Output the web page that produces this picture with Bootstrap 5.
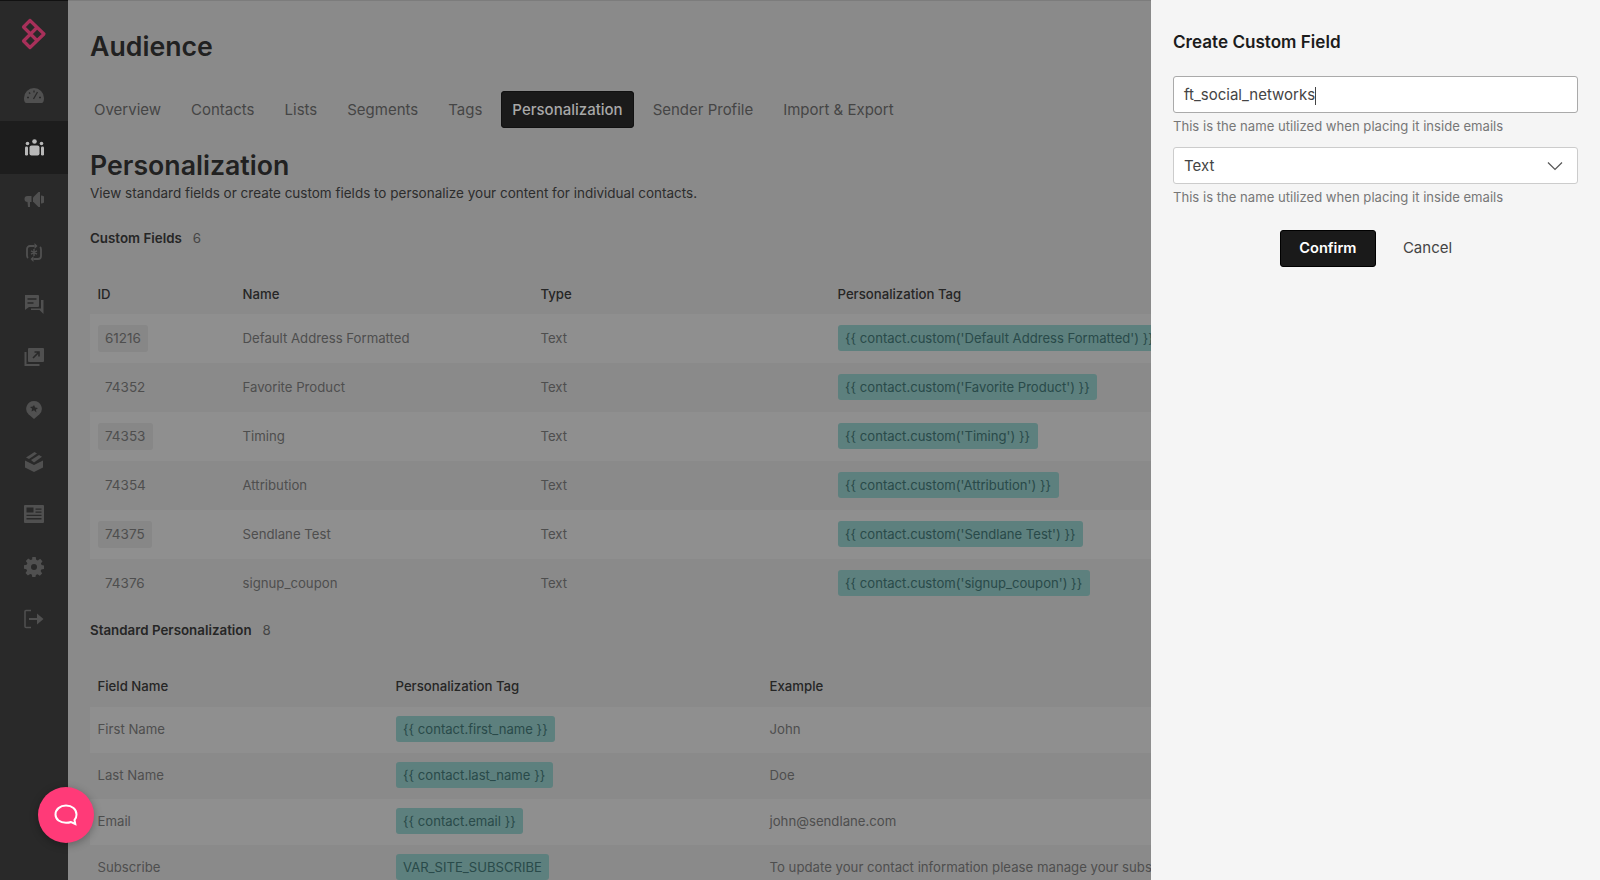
<!doctype html>
<html lang="en">
<head>
<meta charset="utf-8">
<title>Audience</title>
<link href="https://cdn.jsdelivr.net/npm/bootstrap@5.3.0/dist/css/bootstrap.min.css" rel="stylesheet">
<style>
html,body{height:100%;overflow:hidden}
body{font-family:Inter,"Liberation Sans",sans-serif;background:#f7f7f7;color:#8c8c8c;font-size:14px}
.app-shell{height:880px;overflow:hidden}
.side-rail{width:68px;flex:none;background:#292929;position:relative;z-index:1050;height:880px;border-top:1px solid #111}
.rail-logo{height:68px;padding-bottom:3px}
.rail-item{height:52.4px;color:#505050}
.rail-item.is-on{background:#1d1d1d;color:#b8b8b8}
.main-area{padding:26px 0 0 22px;min-width:0;flex:1;overflow:hidden;border-top:1px solid #ddd}
.page-name{font-size:26.7px;font-weight:600;color:#3c3c3c;line-height:38px;margin:0 0 26px}
.tab-row{margin:0 0 19px -7px}
.tab-row .nav-link{font-size:15px;color:#7c7c7c;padding:0 11px;height:37px;line-height:37px;margin-right:8px;border-radius:4px;background:none}
.tab-row .nav-link.active{background:#1a1a1a;color:#a8a8a8;font-weight:500;position:relative;z-index:1050;box-shadow:inset 0 0 0 1px #111}
.sec-title{font-size:26.7px;font-weight:600;color:#3c3c3c;line-height:36px;margin:0}
.sec-desc{font-size:13.5px;color:#505050;line-height:20px;margin:0 0 25px}
.count-row{font-size:13.35px;font-weight:600;color:#444;line-height:20px;margin:0}
.count-num{font-weight:400;color:#7c7c7c;margin-left:7.5px}
.data-grid{width:1480px;table-layout:fixed;--bs-table-bg:transparent;--bs-table-striped-bg:#fff;--bs-table-striped-color:#8c8c8c;--bs-table-color:#8c8c8c;color:#8c8c8c}
.data-grid th{font-size:13.2px;font-weight:500;color:#444;border:0;padding:0 7.5px;height:39px;vertical-align:middle}
.data-grid td{font-size:13.2px;border:0;padding:0 7.5px;vertical-align:middle;white-space:nowrap}
.grid-one td{height:49px}
.grid-two td{height:46px}
.grid-two th{height:40px}
.grid-one{margin:27px 0 12px}
.grid-two{margin:27px 0 0}
.id-chip{display:inline-block;padding:3px 7.5px;border-radius:3px;background:#f0f0f0;font-size:13.5px}
.id-plain{display:inline-block;padding:3px 7.5px;font-size:13.5px}
.tag-chip{display:inline-block;vertical-align:middle;margin-bottom:2px;padding:0 7.5px;height:26px;line-height:26px;border-radius:3px;background:#a6e4e0;color:#4a8484;font-size:13.1px}
.panel-side{--bs-offcanvas-width:449px;background:#f5f5f5;border:0!important;padding:30px 22px 0;color:#222}
.panel-title{font-size:17.1px;font-weight:600;color:#1c1c1c;line-height:24px;margin:0 0 22px}
.field-box{height:37px;border:1px solid #aaa;border-radius:3px;font-size:15px;color:#444;padding:2px 10px 0;box-shadow:none}
.field-pick{border-color:#ccc;background-position:right 14px center;background-size:16px 12px;background-image:url("data:image/svg+xml,%3csvg xmlns='http://www.w3.org/2000/svg' viewBox='0 0 16 12'%3e%3cpath fill='none' stroke='%23555' stroke-width='1.2' d='M1 2.5 8 9.5 15 2.5'/%3e%3c/svg%3e")}
.caret-mark{border-left:1px solid #444;height:18px;display:inline-block}
.field-hint{font-size:13.1px;color:#777;line-height:20px;margin:3px 0 11px}
.act-row{margin-top:12px;gap:27px;padding-right:19px}
.btn-go{background:#1a1a1a;color:#fff;font-weight:600;font-size:14.6px;height:37px;width:96px;padding:0;border-radius:3px;border:1px solid #000}
.btn-go:hover{background:#1a1a1a;color:#fff}
.btn-stop{color:#444;font-size:15px;padding:0;border:0}
.dim-layer{position:fixed;inset:0;background:rgba(0,0,0,.44);z-index:1040}
.chat-bubble{position:fixed;left:37.5px;top:787px;width:56px;height:56px;border-radius:50%;background:#ff3a78;z-index:1060;box-shadow:0 2px 8px rgba(0,0,0,.3)}
</style>
</head>
<body>
<div class="d-flex app-shell">
  <nav class="side-rail d-flex flex-column">
    <div class="rail-logo d-flex align-items-center justify-content-center">
      <svg width="27" height="32" viewBox="1 0 27 32" fill="none" stroke="#a8305a" stroke-width="3.200" stroke-linejoin="round" stroke-linecap="round"><path d="M10 2.500 24 16 10 29.500 3.500 23 17 9.500M10 2.500 3.500 9 17 22.500"/></svg>
    </div>
    <div class="rail-item d-flex align-items-center justify-content-center"><svg width="20" height="15" viewBox="0 0 20 15" fill="currentColor"><path d="M10 0A10 10 0 0 0 0 10c0 1.500.2 3 .8 4 .3.600.8 1 1.500 1h15.400c.7 0 1.200-.4 1.500-1 .6-1 .8-2.500.8-4A10 10 0 0 0 10 0Z"/><path d="M9.500 11 13.500 4M3 9.500h2M15 9.500h2M5 4.500l1.200 1.200M10 2.500v2" stroke="#292929" stroke-width="1.300" fill="none"/></svg></div>
    <div class="rail-item is-on d-flex align-items-center justify-content-center"><svg width="21" height="17" viewBox="0 0 21 17" fill="currentColor"><circle cx="10.500" cy="2.500" r="2.300"/><circle cx="3.500" cy="4.500" r="1.800"/><circle cx="17.500" cy="4.500" r="1.800"/><rect x="5.500" y="6.500" width="10" height="10" rx="2"/><rect x="1" y="7.500" width="3" height="9" rx="1.200"/><rect x="17" y="7.500" width="3" height="9" rx="1.200"/></svg></div>
    <div class="rail-item d-flex align-items-center justify-content-center"><svg width="20" height="17" viewBox="0 0 20 17" fill="currentColor"><path d="M9 6.500 14.500 1h1.500v15h-1.500L9 10.500Z"/><path d="M17 4.500a4 4 0 0 1 0 8Z"/><path d="M3.500 5H7.500v6H6v5H4l-.5-5A3 3 0 0 1 3.500 5Z"/></svg></div>
    <div class="rail-item d-flex align-items-center justify-content-center"><svg width="18" height="21" viewBox="0 0 18 21" fill="none" stroke="currentColor" stroke-width="1.800"><path d="M9.500 4H5a3 3 0 0 0-3 3v6.500c0 1 .4 2 1 2.500M8.500 17H13a3 3 0 0 0 3-3V7.500c0-1-.4-2-1-2.500"/><path d="M9.500 1v6l3-3ZM8.500 14v6l-3-3Z" fill="currentColor" stroke="none"/><path d="M9 7v7M6 8.800l6 3.400M12 8.800l-6 3.400" stroke-width="1.400"/></svg></div>
    <div class="rail-item d-flex align-items-center justify-content-center"><svg width="20" height="19" viewBox="0 0 20 19" fill="currentColor"><path d="M1 0h13a1 1 0 0 1 1 1v10a1 1 0 0 1-1 1H5l-4 3Z"/><path d="M17 5h2.500v14l-4-4H7v-1.500h10Z"/><path d="M3.500 4h9M3.500 8h6" stroke="#292929" stroke-width="1.500"/></svg></div>
    <div class="rail-item d-flex align-items-center justify-content-center"><svg width="20" height="18" viewBox="0 0 20 18" fill="currentColor"><path d="M5 0h14a1 1 0 0 1 1 1v12a1 1 0 0 1-1 1H5a1 1 0 0 1-1-1V1a1 1 0 0 1 1-1Z"/><path d="M1.500 4v13h14" fill="none" stroke="currentColor" stroke-width="2"/><path d="M9 10l6-6M10.500 4H15v4.500" fill="none" stroke="#292929" stroke-width="1.600"/></svg></div>
    <div class="rail-item d-flex align-items-center justify-content-center"><svg width="16" height="18" viewBox="0 0 16 18" fill="currentColor"><path d="M8 0a7.800 7.800 0 0 1 5.500 13.300L8 18l-5.500-4.700A7.800 7.800 0 0 1 8 0Z"/><path fill="#292929" d="m8 4 1.200 2.600 2.800.3-2.100 1.900.6 2.800L8 9.200l-2.500 1.400.6-2.800L4 5.900l2.800-.3Z"/></svg></div>
    <div class="rail-item d-flex align-items-center justify-content-center"><svg width="18" height="20" viewBox="0 0 18 20" fill="currentColor"><path d="M0 8.500 9 13l9-4.500v7L9 20l-9-4.500Z"/><path d="M1 5.500 9.500 0l2.500 1.500L4 7Z"/><path d="M6 8 14 3l3 1.800L9 10.500Z"/></svg></div>
    <div class="rail-item d-flex align-items-center justify-content-center"><svg width="20" height="18" viewBox="0 0 20 18" fill="currentColor"><path fill-rule="evenodd" d="M1 0h18a1 1 0 0 1 1 1v16a1 1 0 0 1-1 1H1a1 1 0 0 1-1-1V1a1 1 0 0 1 1-1Zm1.500 2.500v5h7v-5Zm9 1v1.300h6V3.500Zm0 3v1.300h6V6.500Zm-9 3.200v1.300h15V9.700Zm0 3.400v1.300h15v-1.300Z"/></svg></div>
    <div class="rail-item d-flex align-items-center justify-content-center"><svg width="20" height="20" viewBox="0 0 20 20" fill="currentColor"><path fill-rule="evenodd" d="M8.300 0h3.400l.5 2.700 1.600.7 2.300-1.600 2.400 2.400-1.600 2.300.7 1.600 2.400.5v3.400l-2.700.5-.7 1.600 1.600 2.300-2.400 2.400-2.300-1.600-1.600.7-.5 2.400H8.300l-.5-2.700-1.600-.7-2.300 1.600-2.400-2.400 1.600-2.300-.7-1.600L0 11.700V8.300l2.700-.5.7-1.600-1.600-2.300 2.400-2.400 2.300 1.600 1.600-.7ZM10 7a3 3 0 1 0 0 6 3 3 0 0 0 0-6Z"/></svg></div>
    <div class="rail-item d-flex align-items-center justify-content-center"><svg width="20" height="20" viewBox="0 0 20 20" fill="currentColor"><path d="M7 1.500H2a1 1 0 0 0-1 1v15a1 1 0 0 0 1 1h5" fill="none" stroke="currentColor" stroke-width="1.500"/><path d="M5 9h8V4.500l6.500 5.500-6.500 5.500V11H5Z"/></svg></div>
  </nav>
  <main class="main-area">
    <h1 class="page-name">Audience</h1>
    <ul class="nav tab-row">
      <li class="nav-item"><a class="nav-link" href="#">Overview</a></li>
      <li class="nav-item"><a class="nav-link" href="#">Contacts</a></li>
      <li class="nav-item"><a class="nav-link" href="#">Lists</a></li>
      <li class="nav-item"><a class="nav-link" href="#">Segments</a></li>
      <li class="nav-item"><a class="nav-link" href="#">Tags</a></li>
      <li class="nav-item"><a class="nav-link active" href="#">Personalization</a></li>
      <li class="nav-item"><a class="nav-link" href="#">Sender Profile</a></li>
      <li class="nav-item"><a class="nav-link" href="#">Import &amp; Export</a></li>
    </ul>
    <h2 class="sec-title">Personalization</h2>
    <p class="sec-desc">View standard fields or create custom fields to personalize your content for individual contacts.</p>
    <p class="count-row">Custom Fields <span class="count-num">6</span></p>
    <table class="table table-striped data-grid grid-one">
      <colgroup><col style="width:145px"><col style="width:298px"><col style="width:297px"><col></colgroup>
      <thead><tr><th>ID</th><th>Name</th><th>Type</th><th>Personalization Tag</th></tr></thead>
      <tbody>
        <tr><td><span class="id-chip">61216</span></td><td>Default Address Formatted</td><td>Text</td><td><span class="tag-chip">{{ contact.custom('Default Address Formatted') }}</span></td></tr>
        <tr><td><span class="id-plain">74352</span></td><td>Favorite Product</td><td>Text</td><td><span class="tag-chip">{{ contact.custom('Favorite Product') }}</span></td></tr>
        <tr><td><span class="id-chip">74353</span></td><td>Timing</td><td>Text</td><td><span class="tag-chip">{{ contact.custom('Timing') }}</span></td></tr>
        <tr><td><span class="id-plain">74354</span></td><td>Attribution</td><td>Text</td><td><span class="tag-chip">{{ contact.custom('Attribution') }}</span></td></tr>
        <tr><td><span class="id-chip">74375</span></td><td>Sendlane Test</td><td>Text</td><td><span class="tag-chip">{{ contact.custom('Sendlane Test') }}</span></td></tr>
        <tr><td><span class="id-plain">74376</span></td><td>signup_coupon</td><td>Text</td><td><span class="tag-chip">{{ contact.custom('signup_coupon') }}</span></td></tr>
      </tbody>
    </table>
    <p class="count-row">Standard Personalization <span class="count-num">8</span></p>
    <table class="table table-striped data-grid grid-two">
      <colgroup><col style="width:298px"><col style="width:374px"><col></colgroup>
      <thead><tr><th>Field Name</th><th>Personalization Tag</th><th>Example</th></tr></thead>
      <tbody>
        <tr><td>First Name</td><td><span class="tag-chip">{{ contact.first_name }}</span></td><td>John</td></tr>
        <tr><td>Last Name</td><td><span class="tag-chip">{{ contact.last_name }}</span></td><td>Doe</td></tr>
        <tr><td>Email</td><td><span class="tag-chip">{{ contact.email }}</span></td><td>john@sendlane.com</td></tr>
        <tr><td>Subscribe</td><td><span class="tag-chip">VAR_SITE_SUBSCRIBE</span></td><td>To update your contact information please manage your subscription</td></tr>
      </tbody>
    </table>
  </main>
</div>
<div class="dim-layer"></div>
<aside class="offcanvas offcanvas-end show panel-side" tabindex="-1" data-bs-backdrop="false" data-bs-scroll="true">
  <h5 class="panel-title">Create Custom Field</h5>
  <div class="form-control field-box d-flex align-items-center">ft_social_networks<span class="caret-mark"></span></div>
  <div class="form-text field-hint">This is the name utilized when placing it inside emails</div>
  <select class="form-select field-box field-pick"><option>Text</option></select>
  <div class="form-text field-hint">This is the name utilized when placing it inside emails</div>
  <div class="d-flex justify-content-center align-items-center act-row">
    <button class="btn btn-go" type="button">Confirm</button>
    <button class="btn btn-link text-decoration-none btn-stop" type="button">Cancel</button>
  </div>
</aside>
<div class="chat-bubble d-flex align-items-center justify-content-center">
  <svg width="24" height="22" viewBox="0 0 24 22" fill="none" stroke="#fff" stroke-width="2"><path d="M12 1.500c6 0 10.500 3.500 10.500 9 0 2.500-1 4.500-2 5.500l.8 4-4.300-2c-1.500.6-3.200.8-5 .8C6 18.800 1.500 15.500 1.500 10.500s4.500-9 10.500-9Z"/></svg>
</div>
<script src="https://cdn.jsdelivr.net/npm/bootstrap@5.3.0/dist/js/bootstrap.bundle.min.js"></script>
</body>
</html>
